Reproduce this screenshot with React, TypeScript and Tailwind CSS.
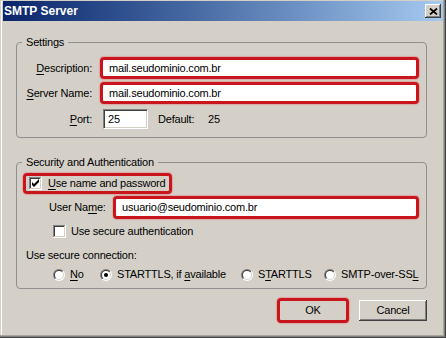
import type { ReactNode } from "react";

const red =
  "border-[3px] border-[#c8161c] rounded-[4px] shadow-[0_0_1px_1px_rgba(230,120,120,0.45)]";

function U({ children }: { children: ReactNode }) {
  return <span className="underline underline-offset-[2px]">{children}</span>;
}

function CheckBox({ checked }: { checked?: boolean }) {
  return (
    <svg width="13" height="13" viewBox="0 0 13 13" className="shrink-0">
      <rect x="0" y="0" width="13" height="13" fill="#ffffff" />
      <rect x="0" y="0" width="12" height="1" fill="#808080" />
      <rect x="0" y="0" width="1" height="12" fill="#808080" />
      <rect x="1" y="1" width="10" height="1" fill="#404040" />
      <rect x="1" y="1" width="1" height="10" fill="#404040" />
      <rect x="1" y="11" width="11" height="1" fill="#d4d0c8" />
      <rect x="11" y="1" width="1" height="11" fill="#d4d0c8" />
      {checked && <polygon points="3,5 3,8 5,10 10,5 10,2 5,7" fill="#000000" />}
    </svg>
  );
}

function Radio({ on }: { on?: boolean }) {
  return (
    <svg width="12" height="12" viewBox="0 0 12 12" className="shrink-0">
      <defs>
        <linearGradient id="rOuter" x1="0" y1="0" x2="1" y2="1">
          <stop offset="0.5" stopColor="#808080" />
          <stop offset="0.5" stopColor="#ffffff" />
        </linearGradient>
        <linearGradient id="rInner" x1="0" y1="0" x2="1" y2="1">
          <stop offset="0.5" stopColor="#404040" />
          <stop offset="0.5" stopColor="#d4d0c8" />
        </linearGradient>
      </defs>
      <circle cx="6" cy="6" r="6" fill="url(#rOuter)" />
      <circle cx="6" cy="6" r="5" fill="url(#rInner)" />
      <circle cx="6" cy="6" r="4" fill="#ffffff" />
      {on && <circle cx="6" cy="6" r="2" fill="#000000" />}
    </svg>
  );
}

export default function App() {
  return (
    <div className="flex h-[338px] w-[446px] flex-col overflow-hidden bg-[#d4d0c8] px-[3px] pt-[1px] font-['Liberation_Sans',Arial,sans-serif] text-[11px] leading-[13px] tracking-[-0.2px] text-black shadow-[inset_-1px_-1px_#404040,inset_-2px_-2px_#808080,inset_-3px_-3px_#a8a49c,inset_1px_1px_#d4d0c8,inset_2px_2px_#ffffff]">
      {/* title bar */}
      <div className="flex h-[20px] items-center justify-between bg-linear-to-r from-[#0a246a] to-[#a6caf0] pl-[1px] pr-[2px]">
        <span className="text-[12px] font-bold tracking-normal text-white">SMTP Server</span>
        <div className="flex h-[14px] w-[16px] items-center justify-center bg-[#d4d0c8] shadow-[inset_-1px_-1px_#404040,inset_1px_1px_#ffffff,inset_-2px_-2px_#808080]">
          <svg width="9" height="7" viewBox="0 0 9 7">
            <path d="M1 0.5 L8 6.5 M8 0.5 L1 6.5" stroke="#000" strokeWidth="1.7" />
          </svg>
        </div>
      </div>

      <div className="flex flex-col pl-[13px] pr-[16px]">
        <fieldset className="mt-[15px] rounded-[4px] border border-[#8f8f8f] pb-[8px] pr-[7px] pt-[8px]">
          <legend className="ml-[5px] px-[4px] leading-[13px]">Settings</legend>
          <div className="flex h-[22px] items-center">
            <span className="w-[75px] text-right">
              <U>D</U>escription:
            </span>
            <div className={`ml-[8px] flex h-[22px] flex-1 items-center bg-white pl-[6px] ${red}`}>
              mail.seudominio.com.br
            </div>
          </div>
          <div className="mt-[3px] flex h-[22px] items-center">
            <span className="w-[75px] text-right">
              <U>S</U>erver Name:
            </span>
            <div className={`ml-[8px] flex h-[22px] flex-1 items-center bg-white pl-[6px] ${red}`}>
              mail.seudominio.com.br
            </div>
          </div>
          <div className="mt-[5px] flex h-[20px] items-center">
            <span className="w-[75px] text-right">
              <U>P</U>ort:
            </span>
            <div className="ml-[11px] flex h-[20px] w-[45px] items-center border border-b-white border-l-[#808080] border-r-white border-t-[#808080] bg-white pl-[4px] shadow-[inset_1px_1px_#404040,inset_-1px_-1px_#d4d0c8]">
              25
            </div>
            <span className="ml-[10px] w-[50px]">Default:</span>
            <span>25</span>
          </div>
        </fieldset>

        <fieldset className="mt-[18px] rounded-[4px] border border-[#8f8f8f] pb-[7px] pr-[7px] pt-[4px]">
          <legend className="ml-[5px] px-[4px] leading-[13px]">Security and Authentication</legend>
          <div className={`ml-[6px] flex h-[21px] w-fit items-center gap-[6px] pl-[3px] pr-[4px] ${red}`}>
            <CheckBox checked />
            <span>
              <U>U</U>se name and password
            </span>
          </div>
          <div className="mt-[2px] flex h-[23px] items-center">
            <span className="ml-[32px] w-[64px]">
              User Na<U>m</U>e:
            </span>
            <div className={`flex h-[23px] flex-1 items-center bg-white pl-[6px] ${red}`}>
              usuario@seudominio.com.br
            </div>
          </div>
          <div className="ml-[36px] mt-[6px] flex h-[13px] items-center gap-[5px]">
            <CheckBox />
            <span>Use secure authentication</span>
          </div>
          <div className="ml-[9px] mt-[11px] h-[13px]">Use secure connection:</div>
          <div className="ml-[36px] mt-[6px] flex h-[13px] items-center">
            <div className="flex w-[47px] items-center gap-[5px]">
              <Radio />
              <span>
                <U>N</U>o
              </span>
            </div>
            <div className="flex w-[141px] items-center gap-[5px]">
              <Radio on />
              <span>
                STARTTLS, if <U>a</U>vailable
              </span>
            </div>
            <div className="flex w-[83px] items-center gap-[5px]">
              <Radio />
              <span>
                S<U>T</U>ARTTLS
              </span>
            </div>
            <div className="flex items-center gap-[5px]">
              <Radio />
              <span>
                SMTP-over-SS<U>L</U>
              </span>
            </div>
          </div>
        </fieldset>

        <div className="mt-[9px] flex items-center justify-end gap-[10px]">
          <div className={`flex h-[25px] w-[72px] items-center justify-center bg-[#d4d0c8] ${red}`}>
            OK
          </div>
          <div className="flex h-[21px] w-[68px] items-center justify-center bg-[#d4d0c8] shadow-[inset_-1px_-1px_#404040,inset_1px_1px_#ffffff,inset_-2px_-2px_#808080,inset_2px_2px_#d4d0c8]">
            Cancel
          </div>
        </div>
      </div>
    </div>
  );
}
